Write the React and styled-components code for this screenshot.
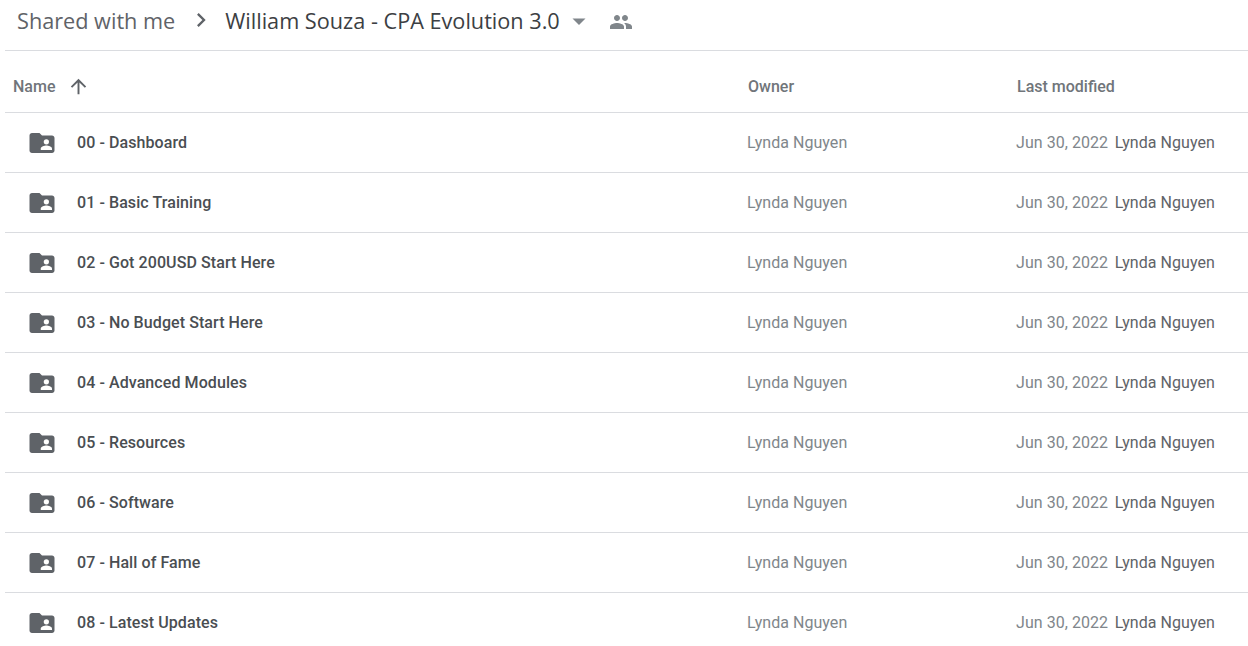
import React from 'react';
import styled, { createGlobalStyle } from 'styled-components';

const GlobalStyle = createGlobalStyle`
  html, body { margin: 0; padding: 0; background: #fff; overflow: hidden; }
  body { font-family: Roboto, "Liberation Sans", sans-serif; }
`;

const Page = styled.div`
  width: 1248px;
  height: 646px;
  padding-left: 5px;
  box-sizing: border-box;
  overflow: hidden;
`;

const Breadcrumb = styled.div`
  display: flex;
  align-items: center;
  height: 51px;
  padding: 0 0 10px 12px;
  box-sizing: border-box;
  border-bottom: 1px solid #dadce0;
  font-family: "Open Sans", Roboto, sans-serif;
  font-size: 21.7px;
  letter-spacing: -0.01px;
`;

const Crumb = styled.span`
  color: ${(p) => (p.$current ? '#3c4043' : '#5f6368')};
`;

const Chevron = styled.svg`
  width: 28px;
  height: 28px;
  margin: 0 10px 0 12px;
  fill: #5f6368;
`;

const Caret = styled.svg`
  width: 24px;
  height: 24px;
  margin: 1px 0 0 7px;
  fill: #80868b;
`;

const PeopleIcon = styled.svg`
  width: 24px;
  height: 24px;
  margin: 4px 0 0 18px;
  fill: #80868b;
`;

const Row = styled.div`
  display: grid;
  grid-template-columns: 741px 270px 1fr;
  align-items: center;
  height: ${(p) => (p.$head ? '62px' : '60px')};
  padding-top: ${(p) => (p.$head ? '9px' : '0')};
  box-sizing: border-box;
  border-bottom: 1px solid #dadce0;
`;

const HeadName = styled.div`
  display: flex;
  align-items: center;
  padding-left: 8px;
  font-size: 16px;
  font-weight: 500;
  color: #70757a;
`;

const HeadCell = styled.div`
  font-size: 16px;
  font-weight: 500;
  color: #70757a;
  padding-left: ${(p) => p.$pad || 0}px;
`;

const ArrowIcon = styled.svg`
  width: 23px;
  height: 23px;
  margin-left: 12px;
  fill: #5f6368;
`;

const NameCell = styled.div`
  display: flex;
  align-items: center;
  padding-left: 22px;
  font-size: 16px;
  font-weight: 500;
  letter-spacing: 0.08px;
  color: #4a4e52;
`;

const FolderIcon = styled.svg`
  width: 30px;
  height: 30px;
  margin-right: 20px;
  flex-shrink: 0;
`;

const OwnerCell = styled.div`
  font-size: 16px;
  color: #80868b;
  letter-spacing: 0.05px;
  padding-left: 1px;
`;

const ModifiedCell = styled.div`
  font-size: 16px;
  color: #80868b;
  letter-spacing: 0.05px;
  display: flex;
  gap: 6.5px;
`;

const Modifier = styled.span`
  color: #5f6368;
`;

const folders = [
  '00 - Dashboard',
  '01 - Basic Training',
  '02 - Got 200USD Start Here',
  '03 - No Budget Start Here',
  '04 - Advanced Modules',
  '05 - Resources',
  '06 - Software',
  '07 - Hall of Fame',
  '08 - Latest Updates',
];

const SharedFolder = () => (
  <FolderIcon viewBox="0 0 24 24">
    <path
      fill="#5f6368"
      d="M10 4H4c-1.1 0-2 .9-2 2v12c0 1.1.9 2 2 2h16c1.1 0 2-.9 2-2V8c0-1.1-.9-2-2-2h-8l-2-2z"
    />
    <circle cx="15.5" cy="11" r="2.1" fill="#fff" />
    <path fill="#fff" d="M11 17.5v-1.2c0-1.5 3-2.3 4.5-2.3s4.5.8 4.5 2.3v1.2z" />
  </FolderIcon>
);

export default function App() {
  return (
    <Page>
      <GlobalStyle />
      <Breadcrumb>
        <Crumb>Shared with me</Crumb>
        <Chevron viewBox="0 0 24 24">
          <path d="M10 6 8.6 7.4 13.2 12l-4.6 4.6L10 18l6-6z" />
        </Chevron>
        <Crumb $current>William Souza - CPA Evolution 3.0</Crumb>
        <Caret viewBox="0 0 24 24">
          <path d="M5.5 9.5h13L12 16z" />
        </Caret>
        <PeopleIcon viewBox="0 0 24 24">
          <path d="M16 11c1.66 0 2.99-1.34 2.99-3S17.66 5 16 5s-3 1.34-3 3 1.34 3 3 3zm-8 0c1.66 0 2.99-1.34 2.99-3S9.66 5 8 5 5 6.34 5 8s1.34 3 3 3zm0 2c-2.33 0-7 1.17-7 3.5V19h14v-2.5C15 14.17 10.33 13 8 13zm8 0c-.29 0-.62.02-.97.05 1.16.84 1.97 1.97 1.97 3.45V19h6v-2.5c0-2.33-4.67-3.5-7-3.5z" />
        </PeopleIcon>
      </Breadcrumb>
      <Row $head>
        <HeadName>
          Name
          <ArrowIcon viewBox="0 0 24 24">
            <path d="M4 12l1.41 1.41L11 7.83V20h2V7.83l5.58 5.59L20 12l-8-8-8 8z" />
          </ArrowIcon>
        </HeadName>
        <HeadCell $pad={2}>Owner</HeadCell>
        <HeadCell $pad={1}>Last modified</HeadCell>
      </Row>
      {folders.map((name) => (
        <Row key={name}>
          <NameCell>
            <SharedFolder />
            {name}
          </NameCell>
          <OwnerCell>Lynda Nguyen</OwnerCell>
          <ModifiedCell>
            Jun 30, 2022
            <Modifier>Lynda Nguyen</Modifier>
          </ModifiedCell>
        </Row>
      ))}
    </Page>
  );
}
